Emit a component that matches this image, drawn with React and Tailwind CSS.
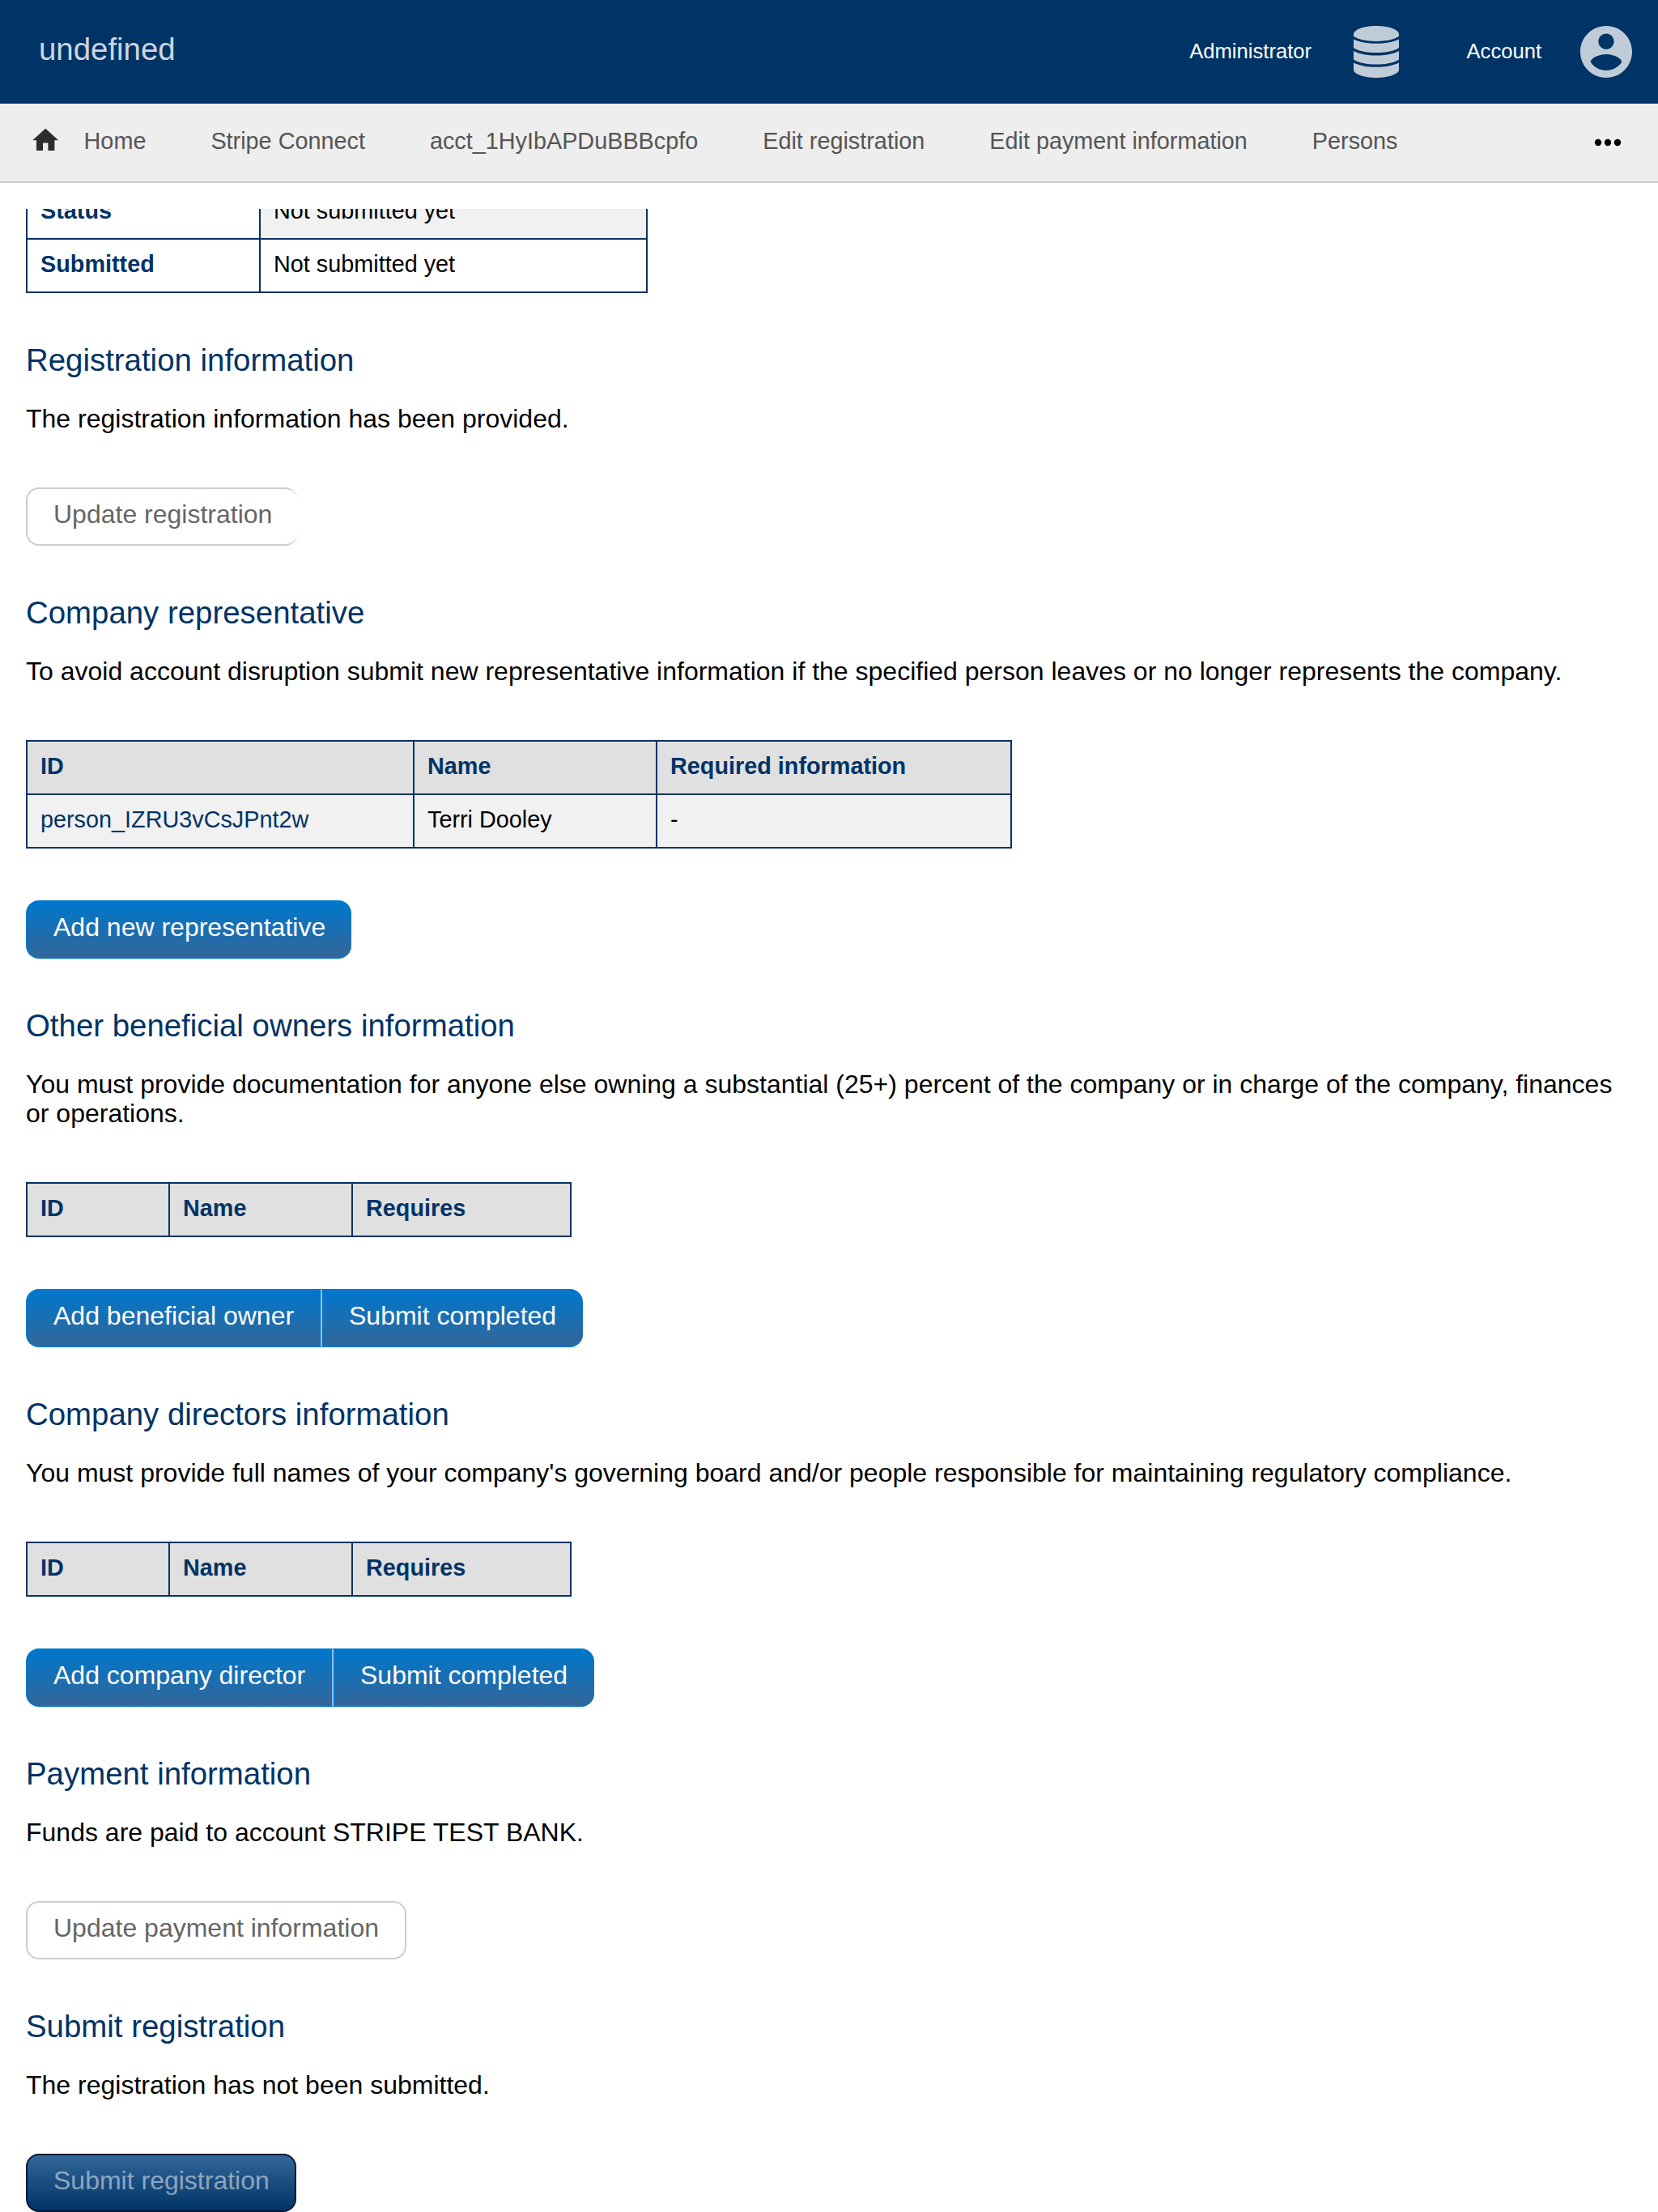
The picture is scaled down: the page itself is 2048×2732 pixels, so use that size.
import React from "react";

const COLUMNS_PERSON = [
  { label: "ID", width: "w-[478px]" },
  { label: "Name", width: "w-[300px]" },
  { label: "Required information", width: "w-[436px]" },
];

const COLUMNS_EMPTY = [
  { label: "ID", width: "w-[176px]" },
  { label: "Name", width: "w-[226px]" },
  { label: "Requires", width: "w-[268px]" },
];

function NavItem({ children }) {
  return <a className="px-10 leading-8">{children}</a>;
}

function Section({ title, text, children }) {
  return (
    <section className="pt-[61px]">
      <h2 className="text-[38.4px] leading-[44px] text-[#003366]">{title}</h2>
      <p className="mt-8 mb-[67px] text-[32px] leading-9">{text}</p>
      {children}
    </section>
  );
}

function DataTable({ columns, row }) {
  return (
    <div className="mb-16 w-fit border-2 border-[#003366] text-[28.8px] leading-8">
      <div className="flex divide-x-2 divide-[#003366] bg-[#e0e0e0] font-bold text-[#003366]">
        {columns.map((c) => (
          <div key={c.label} className={`${c.width} h-16 px-4 pt-[14px]`}>{c.label}</div>
        ))}
      </div>
      {row && (
        <div className="flex divide-x-2 divide-[#003366] border-t-2 border-[#003366] bg-[#f1f1f1]">
          {row.map((cell, i) => (
            <div
              key={cell}
              className={`${columns[i].width} ${i === 0 ? "text-[#003366]" : ""} h-16 px-4 pt-[14px]`}
            >
              {cell}
            </div>
          ))}
        </div>
      )}
    </div>
  );
}

function BlueButtons({ items }) {
  return (
    <div className="flex">
      {items.map(({ label, width }, i) => (
        <button
          key={label}
          className={`${width} h-[72px] border-2 border-[#0077cc] bg-[linear-gradient(#0077cc,#336699)] pb-[6px] text-left text-[32px] leading-9 whitespace-nowrap text-white ${
            i === 0 ? "rounded-l-2xl pl-8" : "pl-[31px]"
          } ${i === items.length - 1 ? "rounded-r-2xl border-r-0" : "border-r-[#99bbdd]"}`}
        >
          {label}
        </button>
      ))}
    </div>
  );
}

export default function App() {
  return (
    <div className="h-[2732px] w-[2048px] overflow-hidden bg-white font-['Liberation_Sans',Arial,sans-serif] text-black">
      <header className="flex h-32 items-center bg-[#003366]">
        <h1 className="mb-[6px] ml-12 text-[38.4px] leading-[44px] text-[#ccd6e0]">undefined</h1>
        <div className="ml-auto flex items-center text-[25.6px] text-white">
          <span className="mb-[2px]">Administrator</span>
          <svg className="ml-[52px] h-16 w-14" viewBox="0 0 56 64" fill="#bfccd8">
            <path d="M28 0C43.5 0 56 4.5 56 10.5V12.8C50 17 40 19 28 19S6 17 0 12.8V10.5C0 4.5 12.5 0 28 0Z" />
            <path d="M0 16.5C7 20 17 21.8 28 21.8S49 20 56 16.5V27C50 31 40 33 28 33S6 31 0 27Z" />
            <path d="M0 31C7 34.6 17 36.6 28 36.6S49 34.6 56 31V41.5C50 45.5 40 47.5 28 47.5S6 45.5 0 41.5Z" />
            <path d="M0 45.4C7 49 17 50.8 28 50.8S49 49 56 45.4V54C56 59.5 43.5 64 28 64S0 59.5 0 54Z" />
          </svg>
          <span className="mb-[2px] ml-[83.5px]">Account</span>
          <svg className="mr-8 ml-12 size-16" viewBox="2 2 20 20" fill="#bfccd8">
            <path d="M12 2C6.48 2 2 6.48 2 12s4.48 10 10 10 10-4.48 10-10S17.52 2 12 2zm0 3c1.66 0 3 1.34 3 3s-1.34 3-3 3-3-1.34-3-3 1.34-3 3-3zm0 14.2c-2.5 0-4.71-1.28-6-3.22.03-1.99 4-3.08 6-3.08 1.99 0 5.97 1.09 6 3.08-1.29 1.94-3.5 3.22-6 3.22z" />
          </svg>
        </div>
      </header>
      <nav className="flex h-[98px] items-center border-b-2 border-[#cccccc] bg-[#eeeeee] pb-1 text-[28.8px] text-[#555555]">
        <svg className="mb-[2px] ml-[36.8px] size-[38.4px]" viewBox="0 0 24 24" fill="#2d2d2d">
          <path d="M10 20v-6h4v6h5v-8h3L12 3 2 12h3v8z" />
        </svg>
        <a className="ml-[28.4px] pr-10 leading-8">Home</a>
        <NavItem>Stripe Connect</NavItem>
        <NavItem>acct_1HyIbAPDuBBBcpfo</NavItem>
        <NavItem>Edit registration</NavItem>
        <NavItem>Edit payment information</NavItem>
        <NavItem>Persons</NavItem>
        <svg className="mt-1 mr-[45px] ml-auto h-[10px] w-[34px]" viewBox="0 0 34 10" fill="#000000">
          <circle cx="5" cy="5" r="4.2" />
          <circle cx="17" cy="5" r="4.2" />
          <circle cx="29" cy="5" r="4.2" />
        </svg>
      </nav>

      <main className="mt-8 px-8">
        <div className="flex h-[104px] w-[768px] flex-col justify-end overflow-hidden border-x-2 border-b-2 border-[#003366] text-[28.8px] leading-8">
          {["Status", "Submitted"].map((label, i) => (
            <div key={label} className={`flex shrink-0 border-[#003366] ${i === 1 ? "h-[66px] border-t-2" : "h-16"}`}>
              <div className="w-[288px] border-r-2 border-[#003366] px-4 pt-[14px] font-bold text-[#003366]">{label}</div>
              <div className={`flex-1 px-4 pt-[14px] ${i === 0 ? "bg-[#f1f1f1]" : ""}`}>Not submitted yet</div>
            </div>
          ))}
        </div>

        <Section title="Registration information" text="The registration information has been provided.">
          <button className="h-[72px] rounded-2xl border-2 border-r-0 border-[#cccccc] px-8 pb-[6px] text-[32px] leading-9 text-[#666666]">
            Update registration
          </button>
        </Section>

        <Section
          title="Company representative"
          text="To avoid account disruption submit new representative information if the specified person leaves or no longer represents the company."
        >
          <DataTable columns={COLUMNS_PERSON} row={["person_IZRU3vCsJPnt2w", "Terri Dooley", "-"]} />
          <BlueButtons items={[{ label: "Add new representative", width: "w-[402px]" }]} />
        </Section>

        <Section
          title="Other beneficial owners information"
          text="You must provide documentation for anyone else owning a substantial (25+) percent of the company or in charge of the company, finances or operations."
        >
          <DataTable columns={COLUMNS_EMPTY} />
          <BlueButtons
            items={[
              { label: "Add beneficial owner", width: "w-[366px]" },
              { label: "Submit completed", width: "w-[322px]" },
            ]}
          />
        </Section>

        <Section
          title="Company directors information"
          text="You must provide full names of your company's governing board and/or people responsible for maintaining regulatory compliance."
        >
          <DataTable columns={COLUMNS_EMPTY} />
          <BlueButtons
            items={[
              { label: "Add company director", width: "w-[380px]" },
              { label: "Submit completed", width: "w-[322px]" },
            ]}
          />
        </Section>

        <Section title="Payment information" text="Funds are paid to account STRIPE TEST BANK.">
          <button className="h-[72px] rounded-2xl border-2 border-[#cccccc] px-8 pb-[6px] text-[32px] leading-9 text-[#666666]">
            Update payment information
          </button>
        </Section>

        <Section title="Submit registration" text="The registration has not been submitted.">
          <button className="h-[72px] rounded-2xl border-2 border-[#001933] bg-[linear-gradient(#336699,#003366)] pr-[31px] pb-[6px] pl-8 text-[32px] leading-9 text-white/50">
            Submit registration
          </button>
        </Section>
      </main>
    </div>
  );
}
